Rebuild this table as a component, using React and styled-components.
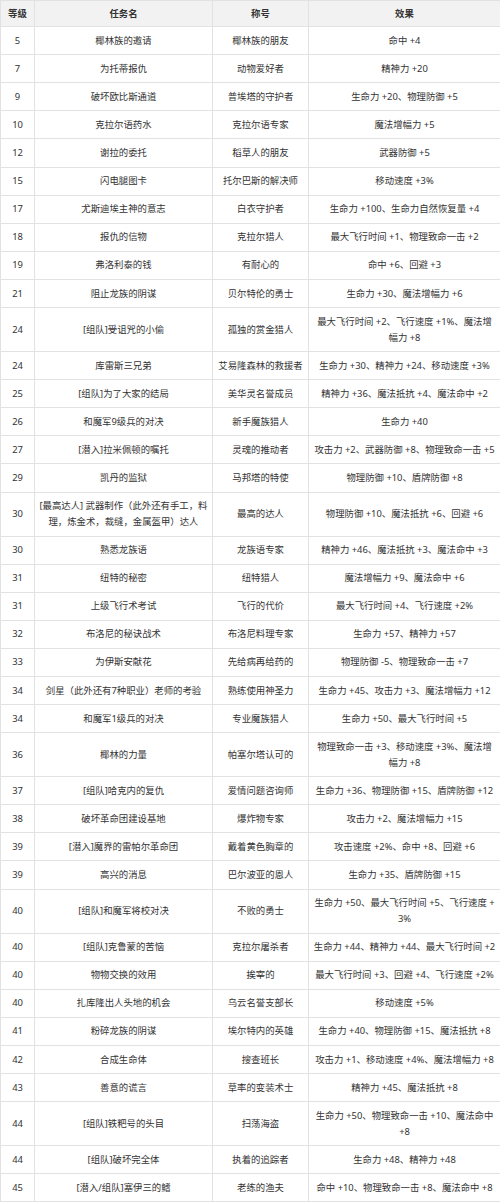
import React from "react";
import styled, { createGlobalStyle } from "styled-components";

const Global = createGlobalStyle`
  html, body { margin: 0; padding: 0; background: #fff; }
  body { font-family: "Noto Sans", "Noto Sans CJK SC", sans-serif; }
`;

const Table = styled.table`
  width: 500px;
  table-layout: fixed;
  border-collapse: collapse;
  font-family: "Noto Sans", "Noto Sans CJK SC", sans-serif;
  font-size: 9.4px;
  color: #333;
`;

const HeadCell = styled.th`
  background: #f2f2f2;
  border: 1px solid #e2e2e2;
  font-weight: bold;
  color: #333;
  line-height: 15.9px;
  padding: 4.6px 2px;
  text-align: center;
  white-space: nowrap;
`;

const Cell = styled.td`
  border: 1px solid #e2e2e2;
  line-height: 15.9px;
  padding: 5.6px ${(p) => p.$pad || 3}px;
  text-align: center;
  white-space: nowrap;
  overflow: visible;
`;

const rows = [
  ["5", "椰林族的邀请", "椰林族的朋友", "命中 +4"],
  ["7", "为托蒂报仇", "动物爱好者", "精神力 +20"],
  ["9", "破坏欧比斯通道", "普埃塔的守护者", "生命力 +20、物理防御 +5"],
  ["10", "克拉尔语药水", "克拉尔语专家", "魔法增幅力 +5"],
  ["12", "谢拉的委托", "稻草人的朋友", "武器防御 +5"],
  ["15", "闪电腿图卡", "托尔巴斯的解决师", "移动速度 +3%"],
  ["17", "尤斯迪埃主神的意志", "白衣守护者", "生命力 +100、生命力自然恢复量 +4"],
  ["18", "报仇的信物", "克拉尔猎人", "最大飞行时间 +1、物理致命一击 +2"],
  ["19", "弗洛利泰的钱", "有耐心的", "命中 +6、回避 +3"],
  ["21", "阻止龙族的阴谋", "贝尔特伦的勇士", "生命力 +30、魔法增幅力 +6"],
  ["24", "[组队]受诅咒的小偷", "孤独的赏金猎人", ["最大飞行时间 +2、飞行速度 +1%、魔法增", "幅力 +8"]],
  ["24", "库雷斯三兄弟", "艾易隆森林的救援者", "生命力 +30、精神力 +24、移动速度 +3%"],
  ["25", "[组队]为了大家的结局", "美华灵名誉成员", "精神力 +36、魔法抵抗 +4、魔法命中 +2"],
  ["26", "和魔军9级兵的对决", "新手魔族猎人", "生命力 +40"],
  ["27", "[潜入]拉米佩顿的嘱托", "灵魂的推动者", "攻击力 +2、武器防御 +8、物理致命一击 +5"],
  ["29", "凯丹的监狱", "马邦塔的特使", "物理防御 +10、盾牌防御 +8"],
  ["30", ["[最高达人] 武器制作（此外还有手工，料", "理，炼金术，裁缝，金属盔甲）达人"], "最高的达人", "物理防御 +10、魔法抵抗 +6、回避 +6"],
  ["30", "熟悉龙族语", "龙族语专家", "精神力 +46、魔法抵抗 +3、魔法命中 +3"],
  ["31", "纽特的秘密", "纽特猎人", "魔法增幅力 +9、魔法命中 +6"],
  ["31", "上级飞行术考试", "飞行的代价", "最大飞行时间 +4、飞行速度 +2%"],
  ["32", "布洛尼的秘诀战术", "布洛尼料理专家", "生命力 +57、精神力 +57"],
  ["33", "为伊斯安献花", "先给病再给药的", "物理防御 -5、物理致命一击 +7"],
  ["34", "剑星（此外还有7种职业）老师的考验", "熟练使用神圣力", "生命力 +45、攻击力 +3、魔法增幅力 +12"],
  ["34", "和魔军1级兵的对决", "专业魔族猎人", "生命力 +50、最大飞行时间 +5"],
  ["36", "椰林的力量", "帕塞尔塔认可的", ["物理致命一击 +3、移动速度 +3%、魔法增", "幅力 +8"]],
  ["37", "[组队]哈克内的复仇", "爱情问题咨询师", "生命力 +36、物理防御 +15、盾牌防御 +12"],
  ["38", "破坏革命团建设基地", "爆炸物专家", "攻击力 +2、魔法增幅力 +15"],
  ["39", "[潜入]魔界的雷帕尔革命团", "戴着黄色胸章的", "攻击速度 +2%、命中 +8、回避 +6"],
  ["39", "高兴的消息", "巴尔波亚的恩人", "生命力 +35、盾牌防御 +15"],
  ["40", "[组队]和魔军将校对决", "不败的勇士", ["生命力 +50、最大飞行时间 +5、飞行速度 +", "3%"]],
  ["40", "[组队]克鲁蒙的苦恼", "克拉尔屠杀者", "生命力 +44、精神力 +44、最大飞行时间 +2"],
  ["40", "物物交换的效用", "挨宰的", "最大飞行时间 +3、回避 +4、飞行速度 +2%"],
  ["40", "扎库隆出人头地的机会", "乌云名誉支部长", "移动速度 +5%"],
  ["41", "粉碎龙族的阴谋", "埃尔特内的英雄", "生命力 +40、物理防御 +15、魔法抵抗 +8"],
  ["42", "合成生命体", "搜查班长", "攻击力 +1、移动速度 +4%、魔法增幅力 +8"],
  ["43", "善意的谎言", "草率的变装术士", "精神力 +45、魔法抵抗 +8"],
  ["44", "[组队]铁粑号的头目", "扫荡海盗", ["生命力 +50、物理致命一击 +10、魔法命中", "+8"]],
  ["44", "[组队]破坏完全体", "执着的追踪者", "生命力 +48、精神力 +48"],
  ["45", "[潜入/组队]塞伊三的鳍", "老练的渔夫", "命中 +10、物理致命一击 +8、魔法命中 +8"],
];

const Lines = ({ v }) =>
  Array.isArray(v)
    ? v.map((l, i) => (
        <React.Fragment key={i}>
          {i > 0 && <br />}
          {l}
        </React.Fragment>
      ))
    : v;

export default function App() {
  return (
    <>
      <Global />
      <Table>
        <colgroup>
          <col style={{ width: 34 }} />
          <col style={{ width: 178 }} />
          <col style={{ width: 96 }} />
          <col style={{ width: 192 }} />
        </colgroup>
        <thead>
          <tr>
            <HeadCell>等级</HeadCell>
            <HeadCell>任务名</HeadCell>
            <HeadCell>称号</HeadCell>
            <HeadCell>效果</HeadCell>
          </tr>
        </thead>
        <tbody>
          {rows.map((r, i) => (
            <tr key={i}>
              <Cell $pad={1}>{r[0]}</Cell>
              <Cell>
                <Lines v={r[1]} />
              </Cell>
              <Cell $pad={1}>
                <Lines v={r[2]} />
              </Cell>
              <Cell $pad={1}>
                <Lines v={r[3]} />
              </Cell>
            </tr>
          ))}
        </tbody>
      </Table>
    </>
  );
}
